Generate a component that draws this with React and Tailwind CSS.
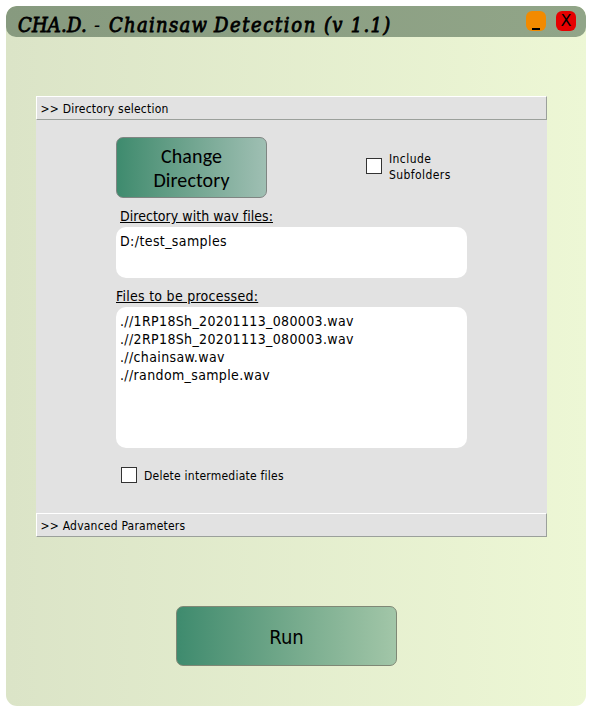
const files = [
  './/1RP18Sh_20201113_080003.wav',
  './/2RP18Sh_20201113_080003.wav',
  './/chainsaw.wav',
  './/random_sample.wav',
];

function SectionHeader({ children }) {
  return (
    <div className="h-6 shrink-0 border border-t-white border-l-white border-r-[#9ba09b] border-b-[#9ba09b] bg-[#e2e2e2] pl-[3.5px] text-[12px] leading-[24px] tracking-[0.22px] whitespace-pre">
      {children}
    </div>
  );
}

function Checkbox() {
  return <span className="block size-4 shrink-0 border border-[#333] bg-white" />;
}

export default function App() {
  return (
    <div className="h-[713px] w-[592px] bg-white p-1.5 font-['DejaVu_Sans_Condensed','DejaVu_Sans',sans-serif] text-black [font-stretch:condensed]">
      <main className="flex h-[700px] w-[580px] flex-col overflow-hidden rounded-[11px] bg-linear-to-r from-[#dbe4c7] to-[#edf7d5]">
        <header className="flex h-[31px] shrink-0 items-start rounded-[10px] bg-linear-to-r from-[#879a7f] to-[#91a588] pl-3">
          <h1 className="flex w-[508px] pt-[6px] font-['DejaVu_Serif_Condensed','DejaVu_Serif',serif] text-[20px] leading-[26px] font-normal italic whitespace-nowrap [-webkit-text-stroke:0.8px_black]">
            <span className="w-[76px] tracking-[0.2px]">CHA.D.</span>
            <span className="w-[15px] [-webkit-text-stroke:0px]">-</span>
            <span className="w-[105px] tracking-[1.3px]">Chainsaw</span>
            <span className="w-[110px] tracking-[1.6px]">Detection</span>
            <span className="tracking-[1.3px]">(v 1.1)</span>
          </h1>
          <div className="flex gap-2.5 pt-[5px]">
            <button className="flex size-5 items-end justify-center rounded-[6px] bg-[#f28a00] pb-[1px]">
              <span className="h-[2px] w-2 bg-black" />
            </button>
            <button className="flex size-5 items-center justify-center rounded-[6px] bg-[#e60000] font-['DejaVu_Sans',sans-serif] text-[16px] leading-5 [font-stretch:normal]">
              X
            </button>
          </div>
        </header>

        <section className="mt-[59px] ml-[30px] flex h-[441px] w-[511px] flex-col bg-[#e2e2e2]">
          <SectionHeader>{'>> Directory selection'}</SectionHeader>
          <div className="flex h-[393px] flex-col pt-[17px] pl-20">
            <div className="flex h-[61px]">
              <button className="h-[61px] w-[151px] rounded-[7px] border border-[#7f8582] bg-linear-to-r from-[#3e8b6e] to-[#9fbfb3] font-['Carlito','Lato',sans-serif] text-[20px] leading-6 tracking-[0.1px] [font-stretch:normal]">
                Change
                <br />
                Directory
              </button>
              <label className="mt-[13px] ml-[99px] flex h-8 items-center gap-[7px] text-[12px] leading-4 tracking-[0.42px]">
                <Checkbox />
                <span className="pt-0.5">
                  Include
                  <br />
                  Subfolders
                </span>
              </label>
            </div>
            <p className="mt-2 h-[21px] pl-1 text-[14px] leading-5 tracking-[0.03px]">
              <span className="underline">Directory with wav files:</span>
            </p>
            <div className="h-[51px] w-[351px] rounded-[10px] bg-white pt-[5px] pl-1 text-[14px] leading-[18px] tracking-[0.4px]">
              D:/test_samples
            </div>
            <p className="mt-2 h-[21px] text-[14px] leading-5 tracking-[0.27px]">
              <span className="underline">Files to be processed:</span>
            </p>
            <div className="h-[141px] w-[351px] rounded-[10px] bg-white pt-[5px] pl-1 text-[14px] leading-[18px] tracking-[0.36px]">
              {files.map((file) => (
                <div key={file}>{file}</div>
              ))}
            </div>
            <label className="mt-[19px] ml-[5px] flex h-4 items-center gap-[7px] text-[12px] leading-4 tracking-[0.24px]">
              <Checkbox />
              <span className="pt-0.5">Delete intermediate files</span>
            </label>
          </div>
          <SectionHeader>{'>> Advanced Parameters'}</SectionHeader>
        </section>

        <button className="mt-[69px] ml-[170px] h-[60px] w-[221px] shrink-0 rounded-[7px] border border-[#7f8875] bg-linear-to-r from-[#3e8b6e] to-[#a2c6a8] pt-0.5 text-[20px]">
          Run
        </button>
      </main>
    </div>
  );
}
